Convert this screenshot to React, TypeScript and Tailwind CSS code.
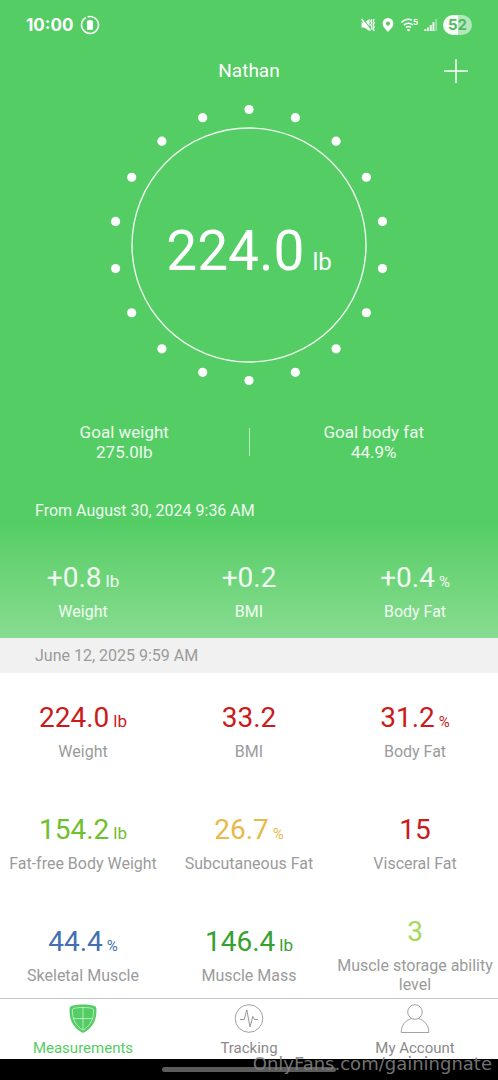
import type { ReactNode } from "react";

type Reading = {
  label: string;
  value: string;
  unit?: string;
  color: string;
};

const CHANGES: Reading[] = [
  { label: "Weight", value: "+0.8", unit: "lb", color: "text-white/90" },
  { label: "BMI", value: "+0.2", color: "text-white/90" },
  { label: "Body Fat", value: "+0.4", unit: "%", color: "text-white/90" },
];

const READINGS: Reading[] = [
  { label: "Weight", value: "224.0", unit: "lb", color: "text-[#cb1a1a]" },
  { label: "BMI", value: "33.2", color: "text-[#cb1a1a]" },
  { label: "Body Fat", value: "31.2", unit: "%", color: "text-[#cb1a1a]" },
  { label: "Fat-free Body Weight", value: "154.2", unit: "lb", color: "text-[#6fc02f]" },
  { label: "Subcutaneous Fat", value: "26.7", unit: "%", color: "text-[#e9b949]" },
  { label: "Visceral Fat", value: "15", color: "text-[#cb1a1a]" },
  { label: "Skeletal Muscle", value: "44.4", unit: "%", color: "text-[#4570b0]" },
  { label: "Muscle Mass", value: "146.4", unit: "lb", color: "text-[#36a12f]" },
  { label: "Muscle storage ability level", value: "3", color: "text-[#a3da5c]" },
];

const DOT_COUNT = 18;

function StatusBar() {
  return (
    <div className="flex h-[50px] items-center justify-between px-[26px] text-white">
      <div className="flex items-center gap-[7px]">
        <span className="font-['Inter'] text-[17px] font-bold leading-5">10:00</span>
        <svg width="20" height="20" viewBox="0 0 20 20" fill="none" aria-hidden="true">
          <path
            d="M10.5 1.5a8.5 8.5 0 1 1-6.6 2.6M2.2 6.6A8.5 8.5 0 0 1 8.8 1.6"
            stroke="currentColor"
            strokeWidth="1.5"
            transform="rotate(-20 10 10)"
          />
          <path d="M8.6 5h2.8v.8H13v9H7v-9h1.6z" fill="currentColor" />
        </svg>
      </div>

      <div className="flex items-center gap-[5px]">
        {/* Muted, vibrating */}
        <svg width="16" height="16" viewBox="0 0 16 16" fill="none" aria-hidden="true">
          <path d="M1.500 5.500h2.600L9.500 2v12l-5.400-3.500H1.500z" fill="currentColor" />
          <path d="M2.600 1.600l8 10" stroke="#54cd64" strokeWidth="1.300" />
          <path d="M1.500 2l9 11.500" stroke="currentColor" strokeWidth="1.400" />
          <path
            d="M11.800 2.400l-1 1.800 1 1.800-1 1.800 1 1.800v3M14.200 2l-1 2 1 2-1 2 1 2-1 2 1 2"
            stroke="currentColor"
            strokeWidth="1.300"
          />
        </svg>
        <svg width="14" height="16" viewBox="0 0 14 16" aria-hidden="true">
          <path
            fillRule="evenodd"
            fill="currentColor"
            d="M7 1a5.4 5.4 0 0 0-5.4 5.4C1.6 9.8 5.2 12.8 7 15c1.8-2.2 5.4-5.2 5.4-8.600A5.400 5.400 0 0 0 7 1zm0 3.500a2.100 2.100 0 1 1 0 4.200 2.100 2.100 0 0 1 0-4.200z"
          />
        </svg>
        <svg width="19" height="16" viewBox="0 0 19 16" fill="none" aria-hidden="true">
          <path
            d="M1.500 5.600C4.300 2.400 8.500 1.700 12 3M3.800 8.200C6.200 5.600 10.200 5.400 13 8M6 10.600c1.500-1.500 3.500-1.500 5 0"
            stroke="currentColor"
            strokeWidth="1.500"
          />
          <circle cx="8.500" cy="13" r="1.300" fill="currentColor" />
          <text x="13" y="8" fontSize="8" fontWeight="700" fontFamily="Inter, sans-serif" fill="currentColor">
            5
          </text>
        </svg>
        <svg width="14" height="14" viewBox="0 0 14 14" aria-hidden="true">
          <path
            d="M.4 11h1.900v2H.4zM3.100 9.400H5V13H3.100zM5.800 7h1.900v6H5.800zM8.500 4.200h1.900V13H8.500z"
            fill="currentColor"
          />
          <path d="M11.200 1h1.900v12h-1.900z" fill="currentColor" opacity=".4" />
        </svg>
        <span className="flex h-5 w-[29px] items-center justify-center rounded-full bg-linear-to-r from-white/95 from-52% to-white/55 to-52% font-['Inter'] text-[15px] font-bold leading-5 text-[#54b862]">
          52
        </span>
      </div>
    </div>
  );
}

function Dial({ value, unit }: { value: string; unit: string }) {
  return (
    <div className="relative mx-auto flex h-[282px] w-[282px] items-center justify-center text-white">
      <svg className="absolute inset-0" viewBox="-141 -141 282 282" aria-hidden="true">
        <circle r="117" fill="none" stroke="white" strokeOpacity=".9" strokeWidth="1.4" />
        {Array.from({ length: DOT_COUNT }, (_, i) => {
          const angle = (i * 2 * Math.PI) / DOT_COUNT;
          return (
            <circle key={i} cx={Math.sin(angle) * 135.5} cy={-Math.cos(angle) * 135.5} r="4.6" fill="white" />
          );
        })}
      </svg>
      <p className="mt-3 flex items-baseline gap-2">
        <span className="text-[55px] leading-[64px]">{value}</span>
        <span className="text-[24px]">{unit}</span>
      </p>
    </div>
  );
}

function Goal({ label, value }: { label: string; value: string }) {
  return (
    <div className="flex-1 text-center text-[17px] leading-5 text-white/90">
      <p>{label}</p>
      <p>{value}</p>
    </div>
  );
}

function Value({ reading }: { reading: Reading }) {
  return (
    <p className={`flex h-8 items-baseline justify-center gap-1 ${reading.color}`}>
      <span className="text-[28px] leading-8">{reading.value}</span>
      {reading.unit ? (
        <span className={reading.unit === "%" ? "text-[15px] leading-5" : "text-[17px] leading-5"}>
          {reading.unit}
        </span>
      ) : null}
    </p>
  );
}

function Tab({ label, active, children }: { label: string; active?: boolean; children: ReactNode }) {
  return (
    <button
      type="button"
      aria-current={active ? "page" : undefined}
      className={`flex flex-1 flex-col items-center gap-[3px] pt-1 text-[15px] leading-5 ${
        active ? "text-[#54cd64]" : "text-[#8a8a8a]"
      }`}
    >
      {children}
      {label}
    </button>
  );
}

function TabBar() {
  return (
    <nav className="flex h-[61px] shrink-0 border-t border-[#c4c4c4] bg-white">
      <Tab label="Measurements" active>
        <svg width="30" height="32" viewBox="0 0 30 32" fill="none" aria-hidden="true">
          <path
            d="M15 1.500c4 0 8 .4 11 1.300 1.500.5 2.300 1.400 2.400 3C29 17 24.500 25.500 15 30 5.500 25.500 1 17 1.600 5.800c.1-1.600.9-2.500 2.400-3 3-.9 7-1.300 11-1.300z"
            fill="currentColor"
          />
          <path
            d="M15 4.500c3.700 0 7 .3 9.300 1 .9.300 1.300.8 1.300 1.700.1 9-3.400 15.800-10.600 19.900C7.800 23 4.300 16.200 4.400 7.200c0-.9.4-1.400 1.300-1.700 2.300-.7 5.600-1 9.300-1zM15 4.500v22.600M5 15.500h20"
            stroke="white"
            strokeOpacity=".8"
            strokeWidth=".7"
          />
        </svg>
      </Tab>
      <Tab label="Tracking">
        <svg width="30" height="32" viewBox="0 0 30 32" fill="none" stroke="currentColor" aria-hidden="true">
          <circle cx="15" cy="15.500" r="13.800" strokeWidth=".8" />
          <path d="M6 16.500h4.200l2.600-9.500 3.200 17 2.800-10.500 1.700 3H24" strokeWidth=".9" />
        </svg>
      </Tab>
      <Tab label="My Account">
        <svg
          width="30"
          height="32"
          viewBox="0 0 30 32"
          fill="none"
          stroke="currentColor"
          strokeWidth=".8"
          aria-hidden="true"
        >
          <circle cx="15" cy="9" r="7.300" />
          <path d="M11.500 15.500C5 17.500 1.200 22.500 1.200 29.500h27.600c0-7-3.800-12-10.300-14" />
        </svg>
      </Tab>
    </nav>
  );
}

export default function App() {
  return (
    <div className="relative flex h-screen flex-col overflow-hidden bg-white font-['Roboto',sans-serif]">
      <main className="min-h-0 flex-1 overflow-hidden">
        <section className="bg-linear-to-b from-[#54cd64] from-82% to-[#87dc90]">
          <StatusBar />

          <header className="grid h-[41px] grid-cols-3 items-center px-7 text-white">
            <h1 className="col-start-2 text-center text-[19px] leading-6">Nathan</h1>
            <button type="button" aria-label="Add measurement" className="justify-self-end">
              <svg width="28" height="28" viewBox="0 0 28 28" stroke="currentColor" strokeWidth="1.500">
                <path d="M14 2v24M2 14h24" />
              </svg>
            </button>
          </header>

          <div className="pt-[13px]">
            <Dial value="224.0" unit="lb" />
          </div>

          <div className="mt-9 flex items-center">
            <Goal label="Goal weight" value="275.0lb" />
            <div className="h-7 w-px bg-white/60" />
            <Goal label="Goal body fat" value="44.9%" />
          </div>

          <p className="mt-[38px] pl-[35px] text-base leading-[22px] text-white/90">From August 30, 2024 9:36 AM</p>

          <div className="mt-10 grid grid-cols-3 pb-4">
            {CHANGES.map((reading) => (
              <div key={reading.label} className="text-center">
                <Value reading={reading} />
                <p className="mt-2 text-base leading-5 text-white/90">{reading.label}</p>
              </div>
            ))}
          </div>
        </section>

        <p className="bg-[#f1f1f1] py-2 pl-[35px] text-base leading-[19px] text-[#9b9b9b]">June 12, 2025 9:59 AM</p>

        <section className="grid auto-rows-[112px] grid-cols-3 pt-[2px]">
          {READINGS.map((reading) => (
            <div key={reading.label} className="flex flex-col justify-center gap-2 text-center">
              <Value reading={reading} />
              <p className="text-base leading-[19px] text-[#9b9b9b]">{reading.label}</p>
            </div>
          ))}
        </section>
      </main>

      <TabBar />

      {/* System gesture strip */}
      <div className="flex h-[21px] shrink-0 items-center justify-center bg-black">
        <div className="h-[5px] w-[174px] rounded-full bg-[#5c5c5c]" />
      </div>

      <p className="pointer-events-none absolute bottom-1 right-[6px] font-['DejaVu_Sans'] text-[18px] leading-6 text-[#808080]/90">
        OnlyFans.com/gainingnate
      </p>
    </div>
  );
}
